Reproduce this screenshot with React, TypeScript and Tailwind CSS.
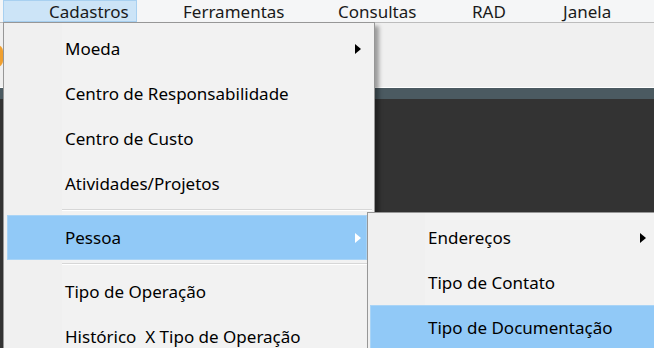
import React from "react";

const mainItems: (string | null)[] = [
  "Moeda",
  "Centro de Responsabilidade",
  "Centro de Custo",
  "Atividades/Projetos",
  null,
  "Pessoa",
  null,
  "Tipo de Operação",
  "Histórico  X Tipo de Operação",
];

const withArrow = ["Moeda", "Pessoa", "Endereços"];

function Arrow({ white }: { white?: boolean }) {
  return (
    <svg width="6" height="10" viewBox="0 0 6 10" className="shrink-0">
      <path d="M0 0 L6 5 L0 10 Z" fill={white ? "#ffffff" : "#000000"} />
    </svg>
  );
}

function MenuItem({
  label,
  active,
  right,
}: {
  label: string;
  active?: boolean;
  right: string;
}) {
  return (
    <div
      className={`h-[45px] flex items-center justify-between pl-[57px] border ${right} ${
        active ? "bg-[#91c9f7] border-[#a9d4f6]" : "border-transparent"
      }`}
    >
      <span className="whitespace-pre">{label}</span>
      {withArrow.includes(label) && <Arrow white={active} />}
    </div>
  );
}

function Separator() {
  return (
    <div className="h-[9px] pt-[3px] pl-[58px] pr-[2px]">
      <div className="h-[2px] border-t border-[#d7d7d7] border-b-white border-b" />
    </div>
  );
}

export default function App() {
  const bar = [
    { label: "Cadastros", w: "w-[134px]", pl: "pl-[45px]", active: true },
    { label: "Ferramentas", w: "w-[155px]", pl: "pl-[46px]" },
    { label: "Consultas", w: "w-[148px]", pl: "pl-[46px]" },
    { label: "RAD", w: "w-[88px]", pl: "pl-[32px]" },
    { label: "Janela", w: "w-[126px]", pl: "pl-[35px]" },
  ];

  return (
    <div className="relative w-[654px] h-[348px] overflow-hidden font-['Noto_Sans',sans-serif] text-[17px] text-black flex flex-col bg-[#333333]">
      {/* menu bar */}
      <div className="h-[23px] shrink-0 flex pl-[3px] bg-[#f5f6f7] border-b border-[#bcbcbc]">
        {bar.map((b) => (
          <div
            key={b.label}
            className={`${b.w} ${b.pl} h-[22px] flex items-center leading-none text-[#1a1a1a] ${
              b.active ? "bg-[#cce4f7] border border-[#a8d0f0]" : ""
            }`}
          >
            {b.label}
          </div>
        ))}
      </div>

      {/* toolbar area */}
      <div className="h-[65px] shrink-0 bg-[#f0f0f0] border-b border-white relative">
        <div className="absolute -left-[9px] top-[22px] w-[12px] h-[22px] rounded-full bg-[#f0a030]" />
      </div>
      <div className="h-[11px] shrink-0 bg-[#4b5a61]" />
      <div className="flex-1 bg-[#333333]" />

      {/* main dropdown */}
      <div className="absolute left-[3px] top-[22px] w-[372px] h-[360px] border border-[#979797] pt-[3px] bg-[linear-gradient(to_right,#f0f0f0_58px,#f2f2f2_58px)] shadow-[4px_4px_4px_rgba(0,0,0,0.35)]">
        {mainItems.map((it, i) =>
          it === null ? (
            <Separator key={i} />
          ) : (
            <div key={i} className="ml-[3px]">
              <MenuItem label={it} active={it === "Pessoa"} right="mr-[7px] pr-[5px]" />
            </div>
          )
        )}
      </div>

      {/* submenu Pessoa */}
      <div className="absolute left-[367px] top-[212px] w-[300px] h-[160px] border border-[#979797] pt-[2px] bg-[linear-gradient(to_right,#f0f0f0_57px,#f2f2f2_57px)] shadow-[4px_4px_4px_rgba(0,0,0,0.35)]">
        {["Endereços", "Tipo de Contato", "Tipo de Documentação"].map((it) => (
          <div key={it} className="ml-[2px]">
            <MenuItem
              label={it}
              active={it === "Tipo de Documentação"}
              right="mr-[2px] pr-[17px]"
            />
          </div>
        ))}
      </div>
    </div>
  );
}
